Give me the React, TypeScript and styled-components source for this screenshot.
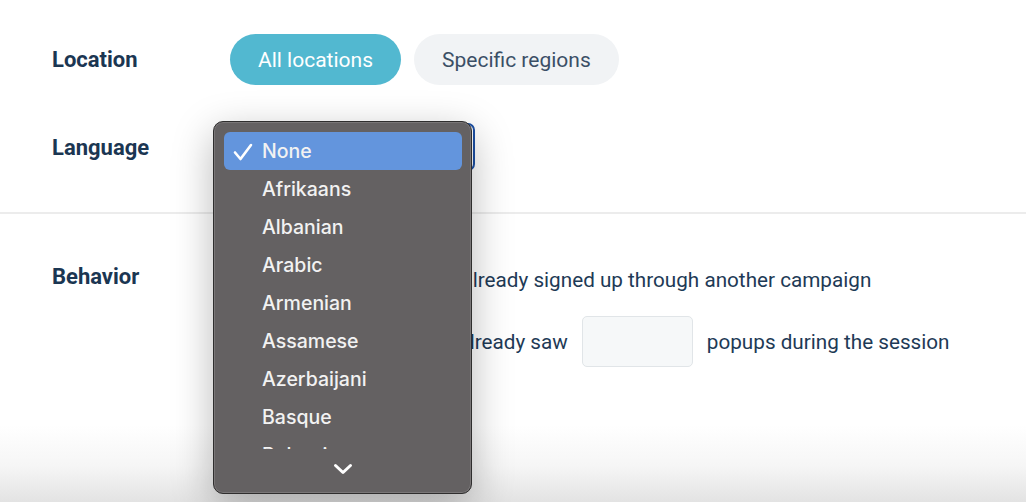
import React from "react";
import styled, { createGlobalStyle } from "styled-components";

const GlobalStyle = createGlobalStyle`
  html, body {
    margin: 0;
    height: 100%;
  }
  body {
    font-family: Roboto, "Liberation Sans", sans-serif;
    color: #1e3a56;
    background: linear-gradient(to bottom, #ffffff 0, #ffffff 425px, #f6f6f6 465px, #e3e3e3 502px);
    overflow: hidden;
  }
`;

const Page = styled.div`
  min-height: 100vh;
`;

const Section = styled.section`
  padding: 34px 0 41px 52px;
  display: flex;
  flex-direction: column;
  gap: 38px;
`;

const Row = styled.div<{ $align?: string }>`
  display: grid;
  grid-template-columns: 178px 1fr;
  align-items: ${({ $align }) => $align || "center"};
`;

const Label = styled.div`
  font-size: 22px;
  font-weight: 700;
  color: #1b3652;
`;

const Pills = styled.div`
  display: flex;
  gap: 13px;
`;

const Pill = styled.button<{ $active?: boolean }>`
  height: 51px;
  padding: 0 28px;
  border: none;
  border-radius: 26px;
  font-family: Roboto, "Liberation Sans", sans-serif;
  font-size: 21px;
  background: ${({ $active }) => ($active ? "#52b8d0" : "#f1f3f5")};
  color: ${({ $active }) => ($active ? "#ffffff" : "#3b4f66")};
`;

const SelectWrap = styled.div`
  position: relative;
  width: 245px;
  height: 48px;
`;

const SelectBox = styled.div`
  box-sizing: border-box;
  height: 48px;
  width: 245px;
  border: 2px solid #1c4fa3;
  border-radius: 7px;
  background: #fff;
`;

const Divider = styled.hr`
  margin: 0;
  border: none;
  border-top: 2px solid #ececec;
`;

const Behavior = styled.section`
  padding: 50px 0 0 52px;
`;

const BehaviorLabel = styled(Label)`
  line-height: 26px;
`;

const Options = styled.div`
  display: flex;
  flex-direction: column;
  gap: 23px;
  padding-top: 3px;
`;

const Option = styled.div`
  display: flex;
  align-items: center;
  font-size: 20.7px;
  color: #1e3a56;
  line-height: 26px;
  min-height: 26px;
`;

const Check = styled.span<{ $space: number }>`
  display: inline-block;
  flex: none;
  width: 20px;
  height: 20px;
  border: 2px solid #c9d0d6;
  border-radius: 4px;
  box-sizing: border-box;
  margin-right: ${({ $space }) => $space}px;
`;

const NumberInput = styled.div`
  box-sizing: border-box;
  width: 111px;
  height: 51px;
  margin: 0 14px;
  border: 1px solid #e1e5e8;
  border-radius: 5px;
  background: #f6f8f9;
`;

const Menu = styled.div`
  position: absolute;
  left: -17px;
  top: -2px;
  width: 259px;
  height: 373px;
  box-sizing: border-box;
  background: #646162;
  border: 1px solid #2f2e2e;
  border-radius: 10px;
  box-shadow: inset 0 0 0 1px #7a7778, 0 12px 40px rgba(0, 0, 0, 0.28);
  padding: 10px 9px 0 10px;
  display: flex;
  flex-direction: column;
  font-family: Inter, "Noto Sans", sans-serif;
  z-index: 5;
`;

const List = styled.div`
  height: 317px;
  overflow: hidden;
`;

const Item = styled.div<{ $selected?: boolean }>`
  position: relative;
  height: 38px;
  display: flex;
  align-items: center;
  padding-left: 38px;
  border-radius: 6px;
  font-size: 19.5px;
  font-weight: 500;
  color: #f2f2f2;
  background: ${({ $selected }) => ($selected ? "#6395dd" : "transparent")};
`;

const Tick = styled.svg`
  position: absolute;
  left: 9px;
  top: 11px;
`;

const Scroll = styled.div`
  flex: 1;
  display: flex;
  align-items: center;
  justify-content: center;
  padding-bottom: 4px;
`;

const languages = [
  "None",
  "Afrikaans",
  "Albanian",
  "Arabic",
  "Armenian",
  "Assamese",
  "Azerbaijani",
  "Basque",
  "Bulgarian",
];

export default function App() {
  return (
    <Page>
      <GlobalStyle />
      <Section>
        <Row>
          <Label>Location</Label>
          <Pills>
            <Pill $active>All locations</Pill>
            <Pill>Specific regions</Pill>
          </Pills>
        </Row>
        <Row>
          <Label>Language</Label>
          <SelectWrap>
            <SelectBox />
            <Menu>
              <List>
                {languages.map((lang, i) => (
                  <Item key={lang} $selected={i === 0}>
                    {i === 0 && (
                      <Tick width="20" height="18" viewBox="0 0 20 18">
                        <path
                          d="M2 9.5 L7.5 16 L18 2"
                          fill="none"
                          stroke="#ffffff"
                          strokeWidth="2.6"
                          strokeLinecap="round"
                          strokeLinejoin="round"
                        />
                      </Tick>
                    )}
                    {lang}
                  </Item>
                ))}
              </List>
              <Scroll>
                <svg width="20" height="12" viewBox="0 0 20 12">
                  <path
                    d="M2.5 2.5 L10 9.5 L17.5 2.5"
                    fill="none"
                    stroke="#ffffff"
                    strokeWidth="3"
                    strokeLinecap="round"
                    strokeLinejoin="round"
                  />
                </svg>
              </Scroll>
            </Menu>
          </SelectWrap>
        </Row>
      </Section>
      <Divider />
      <Behavior>
        <Row $align="start">
          <BehaviorLabel>Behavior</BehaviorLabel>
          <Options>
            <Option>
              <Check $space={17} />
              Hide for visitors who already signed up through another campaign
            </Option>
            <Option>
              <Check $space={48} />
              Hide if the visitor already saw
              <NumberInput />
              popups during the session
            </Option>
          </Options>
        </Row>
      </Behavior>
    </Page>
  );
}
